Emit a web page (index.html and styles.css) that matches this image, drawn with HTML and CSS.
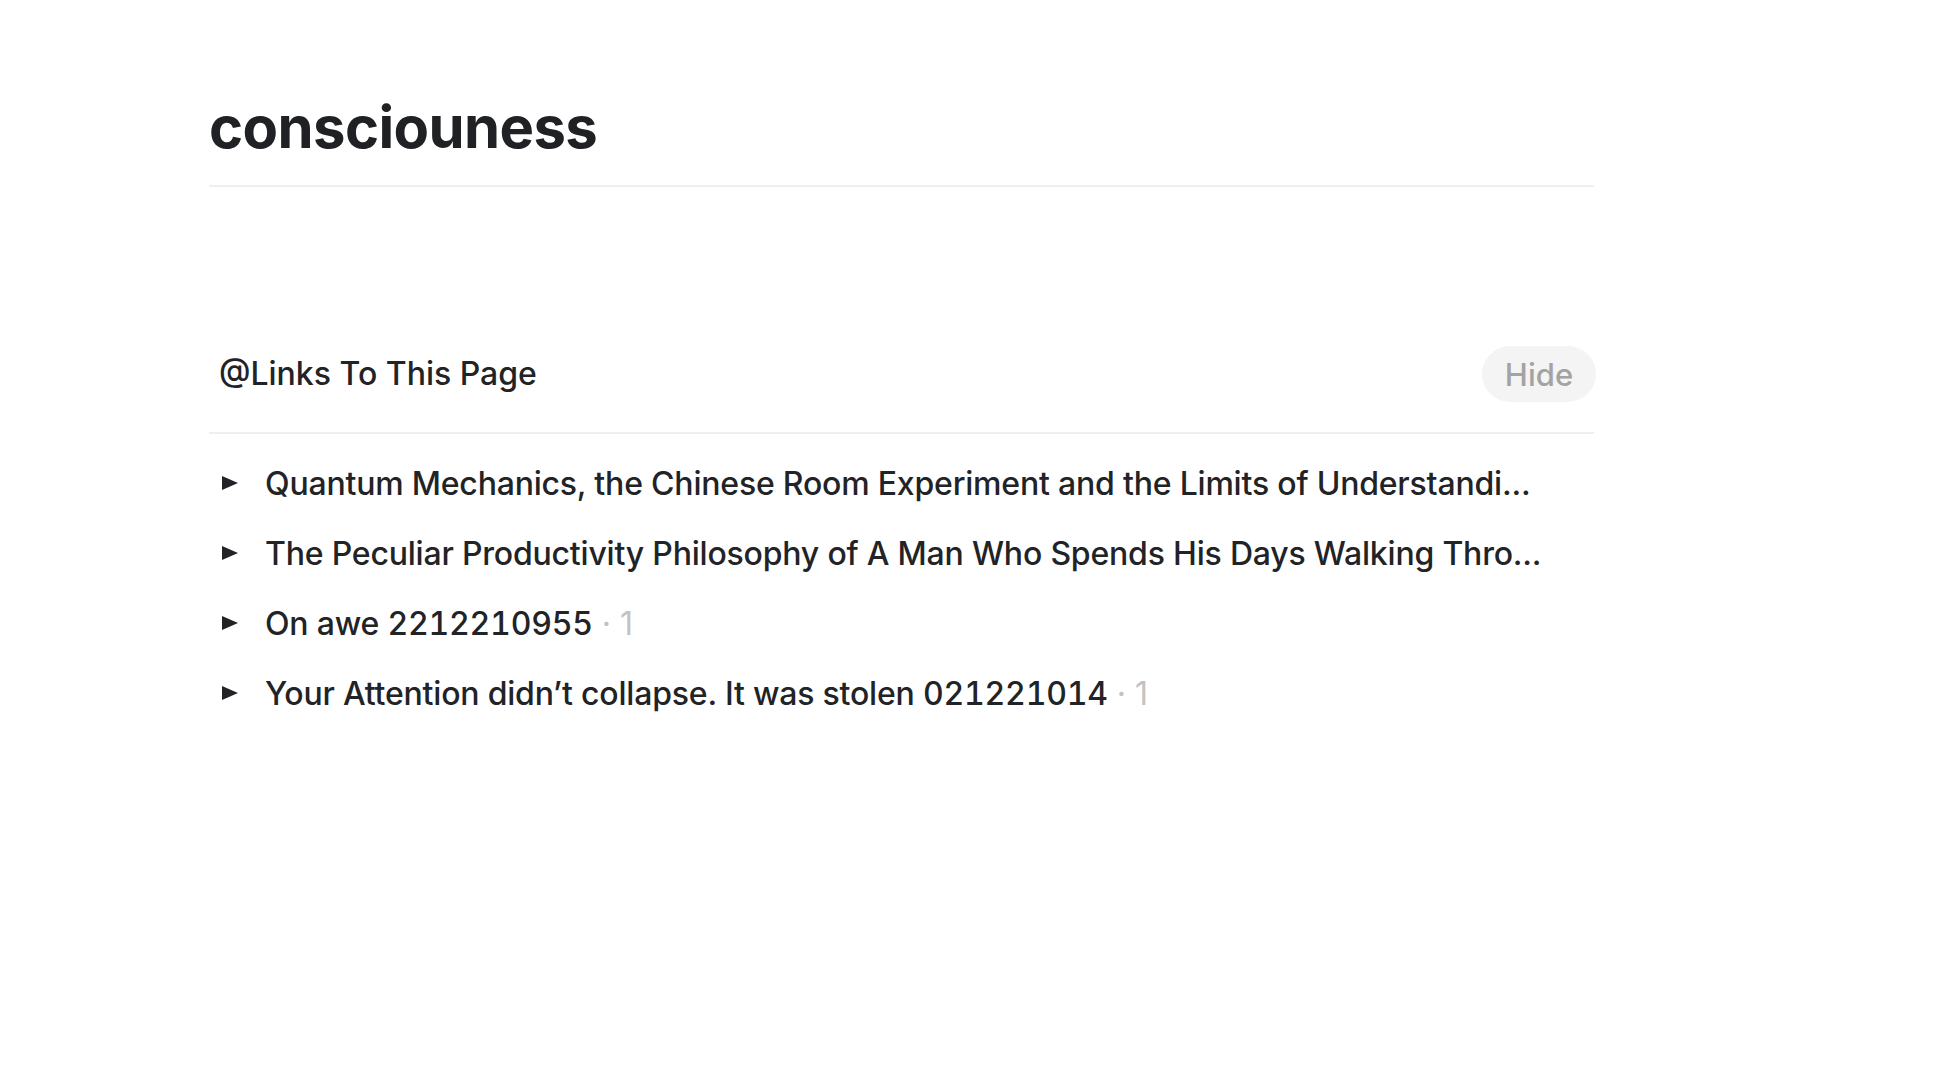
FILE: index.html
```html
<!DOCTYPE html>
<html lang="en">
<head>
<meta charset="utf-8">
<title>consciouness</title>
<link rel="stylesheet" href="styles.css">
</head>
<body>
<main class="page">
  <h1 class="page-title">consciouness</h1>
  <section class="links">
    <div class="links-header">
      <span class="links-title">@Links To This Page</span>
      <button class="hide-btn">Hide</button>
    </div>
    <ul class="link-list">
      <li class="link-row">
        <svg class="caret" width="16" height="14" viewBox="0 0 16 14"><polygon points="0,0 16,7 0,14"/></svg>
        <span class="link-text">Quantum Mechanics, the Chinese Room Experiment and the Limits of Understandi...</span>
      </li>
      <li class="link-row">
        <svg class="caret" width="16" height="14" viewBox="0 0 16 14"><polygon points="0,0 16,7 0,14"/></svg>
        <span class="link-text">The Peculiar Productivity Philosophy of A Man Who Spends His Days Walking Thro...</span>
      </li>
      <li class="link-row">
        <svg class="caret" width="16" height="14" viewBox="0 0 16 14"><polygon points="0,0 16,7 0,14"/></svg>
        <span class="link-text">On awe <span class="num">2212210955</span></span><span class="count">&nbsp;· 1</span>
      </li>
      <li class="link-row">
        <svg class="caret" width="16" height="14" viewBox="0 0 16 14"><polygon points="0,0 16,7 0,14"/></svg>
        <span class="link-text">Your Attention didn’t collapse. It was stolen <span class="num">021221014</span></span><span class="count">&nbsp;· 1</span>
      </li>
    </ul>
  </section>
</main>
</body>
</html>
```

FILE: styles.css
```css
html, body {
  margin: 0;
  padding: 0;
  background: #ffffff;
}

body {
  font-family: Inter, "Noto Sans", "Liberation Sans", sans-serif;
  color: #222326;
}

.page {
  width: 1385px;
  margin-left: 209px;
  padding-top: 92px;
}

.page-title {
  margin: 0;
  padding: 0 0 23px 0;
  font-size: 58px;
  line-height: 70px;
  font-weight: 700;
  letter-spacing: -0.6px;
  color: #202124;
  border-bottom: 2px solid #efefef;
}

.links {
  margin-top: 159px;
}

.links-header {
  display: flex;
  align-items: center;
  justify-content: space-between;
  padding: 0 0 30px 10px;
  border-bottom: 2px solid #efefef;
}

.links-title {
  font-size: 32px;
  font-weight: 500;
  line-height: 56px;
}

.hide-btn {
  height: 56px;
  width: 114px;
  margin-right: -2px;
  border: none;
  border-radius: 28px;
  background: #f4f4f4;
  color: #a3a3a3;
  font-family: inherit;
  font-size: 31px;
  font-weight: 500;
  padding: 0;
}

.link-list {
  list-style: none;
  margin: 14px 0 0 0;
  padding: 0;
}

.link-row {
  display: flex;
  align-items: center;
  height: 70px;
  padding-left: 13px;
  white-space: nowrap;
  font-size: 32px;
  font-weight: 500;
  letter-spacing: -0.2px;
}

.caret {
  flex: none;
  fill: #222326;
  margin-right: 27px;
}

.link-text {
  color: #222326;
}

.num {
  font-variant-numeric: tabular-nums;
}

.count {
  color: #c2c2c2;
  font-weight: 400;
  letter-spacing: 0;
}
```
